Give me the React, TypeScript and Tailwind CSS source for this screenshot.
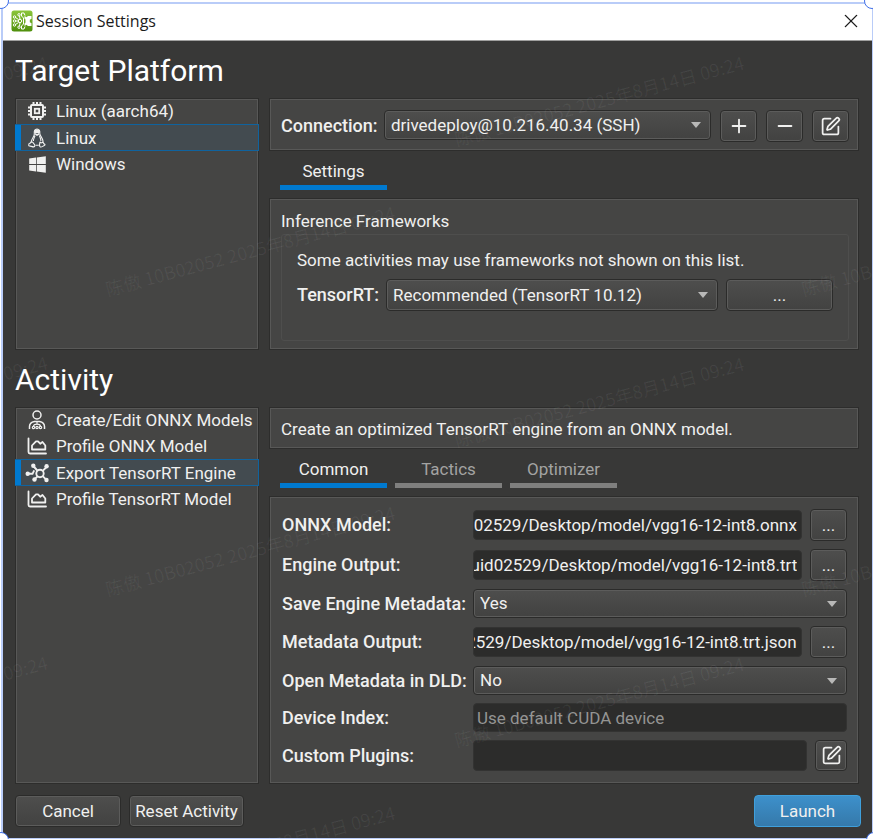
import { useLayoutEffect, useRef, useState } from 'react';
import type { ReactNode } from 'react';
import { Minus, Plus, SquarePen, X } from 'lucide-react';
import { FaWindows } from 'react-icons/fa';

const PANEL = 'border border-[#2d2d2c] bg-[#454544] shadow-[inset_0_0_0_1px_#585857]';
const RAISED =
  'rounded-[4px] border border-[#2b2b2a] bg-linear-to-b from-[#4e4e4d] to-[#424241] shadow-[inset_0_0_0_1px_#5c5c5b]';
const LABEL = 'text-[18px] font-medium whitespace-nowrap';

function AppIcon() {
  return (
    <svg viewBox="0 0 22 22" className="size-[22px] shrink-0" aria-hidden="true">
      <defs>
        <linearGradient id="app-green" x1="0" y1="0" x2="0" y2="1">
          <stop offset="0" stopColor="#8cc63a" />
          <stop offset="1" stopColor="#4f8f0c" />
        </linearGradient>
      </defs>
      <rect x="0.5" y="0.5" width="21" height="21" rx="2.5" fill="url(#app-green)" />
      <g fill="none" stroke="#fff" strokeWidth="1">
        <path d="M4.500 7.500l3 2M4.500 11h3M4.500 14.500l3-2M8.500 6l.5 3M8.500 16l.5-3" />
        <circle cx="3.500" cy="7" r="1.200" />
        <circle cx="3.500" cy="11" r="1.200" />
        <circle cx="3.500" cy="15" r="1.200" />
        <circle cx="8" cy="4.800" r="1.200" />
        <circle cx="8" cy="17.200" r="1.200" />
        <circle cx="9" cy="11" r="1.700" />
        <path d="M10.500 3v3l2 2v6l-2 2v3M10.500 3h2.500l1 2.500M10.500 19h2.500l1-2.500" />
      </g>
      <path
        d="M13.500 6l2 1.200L17 6h3.500v2.800l-1.700 1v2.400l1.700 1V16H17l-1.500-1.200-2 1.200v-2.500l1-1v-3l-1-1z"
        fill="#fff"
      />
    </svg>
  );
}

function ChipIcon() {
  return (
    <svg viewBox="0 0 20 20" className="size-5" fill="none" stroke="currentColor" strokeWidth="2" aria-hidden="true">
      <rect x="4" y="4" width="12" height="12" rx="1" />
      <rect x="7.800" y="7.800" width="4.400" height="4.400" strokeWidth="1.800" />
      <path
        d="M6.500 4V1M10 4V1M13.500 4V1M6.500 19v-3M10 19v-3M13.500 19v-3M4 6.500H1M4 10H1M4 13.500H1M19 6.500h-3M19 10h-3M19 13.500h-3"
        strokeWidth="2"
      />
    </svg>
  );
}

function PenguinIcon() {
  return (
    <svg viewBox="0 0 20 20" className="size-5" fill="none" stroke="currentColor" strokeWidth="1.100" aria-hidden="true">
      <path d="M7.300 6C7 2.800 7.700 1 10 1s3.100 1.800 2.800 4.500c.2 2.300 2.600 4.300 3.100 7.100.2 1 .1 1.700-.2 2.200M7.300 6c.1 2.300-2.300 4.300-2.900 7-.1.700-.2 1-.1 1.500" />
      <path d="M7.900 3C8.200 1.500 11.800 1.500 12.200 3v1.500H7.900z" fill="currentColor" />
      <path d="M8 5.700l2 1.300 2.200-1.300" strokeWidth="1.600" />
      <path d="M8 7.500c-.5 2-1.700 3.500-1.600 5.500M12.400 7.500c.6 2 1.500 3 1.500 5.500M8.500 17.300h3.300" />
      <path d="M4.500 13.800c1.200 0 2 1.300 2.700 2.300 1 1.300.9 2.700-.5 2.800-1.500 0-3-.9-4.400-1-1-.1-.4-1.300-.4-2 0-1 1.700-.4 1.800-1.300zM13 13.800c.5 1.400 2.200 1.200 2.900.4.700.3.400 1.500 1.500 1.900 1.200.5.400 1.100-.6 1.600-1.400.6-2 1.700-3.500 1.200-1.600-.5-.6-3-.3-5.100z" />
    </svg>
  );
}

function ModelEditIcon() {
  return (
    <svg viewBox="0 0 20 20" className="size-5" fill="none" stroke="currentColor" strokeWidth="1.500" aria-hidden="true">
      <circle cx="10" cy="5" r="4" />
      <path d="M2.500 19v-2.500c0-3 2.500-4.500 5-5h5c2.500.5 5 2 5 5V19" />
      <path d="M10 12v2.500M6.500 16.500c0-1.800 1-2.300 3.500-2.300s3.500.5 3.500 2.300" strokeWidth="1.200" />
      <circle cx="6.500" cy="17.500" r="1.200" strokeWidth="1.200" />
      <circle cx="10" cy="17.500" r="1.200" strokeWidth="1.200" />
      <circle cx="13.500" cy="17.500" r="1.200" strokeWidth="1.200" />
    </svg>
  );
}

function ProfileIcon() {
  return (
    <svg viewBox="0 0 20 18" className="h-[18px] w-5" fill="none" stroke="currentColor" strokeWidth="1.800" strokeLinejoin="round" strokeLinecap="round" aria-hidden="true">
      <path d="M1.500 1.500v13.500q0 1.500 1.500 1.500h16" />
      <path d="M5 12.500V8.500L9 4.300h2l2.200 2.400L15.500 5l2.800 3.500v4z" />
    </svg>
  );
}

function EngineIcon() {
  return (
    <svg viewBox="0 0 24 20" className="h-5 w-6" fill="none" stroke="currentColor" strokeWidth="1.900" aria-hidden="true">
      <circle cx="15" cy="10.500" r="3.700" />
      <path d="M2.500 10.800h5l1.700-3.500M8.300 3l4 4.500M9.500 16.300l3-3M17.700 7.800L22 3.500M17.700 13.200l4 4" />
      <g fill="currentColor" stroke="none">
        <circle cx="2.700" cy="10.800" r="2.200" />
        <circle cx="8.300" cy="2.700" r="2.200" />
        <circle cx="9.500" cy="16.500" r="2.200" />
        <circle cx="21.600" cy="3.200" r="2.200" />
        <circle cx="21.500" cy="17" r="2.200" />
      </g>
    </svg>
  );
}

interface ListItem {
  label: string;
  icon: ReactNode;
}

const platforms: ListItem[] = [
  { label: 'Linux (aarch64)', icon: <ChipIcon /> },
  { label: 'Linux', icon: <PenguinIcon /> },
  { label: 'Windows', icon: <FaWindows className="size-[19px]" /> },
];

const activities: ListItem[] = [
  { label: 'Create/Edit ONNX Models', icon: <ModelEditIcon /> },
  { label: 'Profile ONNX Model', icon: <ProfileIcon /> },
  { label: 'Export TensorRT Engine', icon: <EngineIcon /> },
  { label: 'Profile TensorRT Model', icon: <ProfileIcon /> },
];

function SideList({ items, initial }: { items: ListItem[]; initial: number }) {
  const [selected, setSelected] = useState(initial);

  return (
    <ul className={`w-[244px] shrink-0 ${PANEL}`}>
      {items.map((item, i) => (
        <li key={item.label} className="-mx-px first:-mt-px">
          <button
            type="button"
            aria-pressed={i === selected}
            onClick={() => setSelected(i)}
            className={`flex w-full items-center border-y text-left whitespace-nowrap ${
              i === selected
                ? 'h-[27px] border-r border-[#0f639f] bg-[#434b50]'
                : 'h-[26px] border-transparent'
            }`}
          >
            <span className={`h-full w-[6px] shrink-0 ${i === selected ? 'bg-[#0079cf]' : ''}`} />
            <span className="mr-[3px] flex w-8 shrink-0 justify-center">{item.icon}</span>
            {item.label}
          </button>
        </li>
      ))}
    </ul>
  );
}

interface SelectProps {
  id: string;
  value: string;
  className: string;
}

function Select({ id, value, className }: SelectProps) {
  return (
    <div className={`relative min-w-0 ${className}`}>
      <select id={id} className={`size-full appearance-none pr-6 pb-px pl-[6px] ${RAISED}`}>
        <option>{value}</option>
      </select>
      <svg viewBox="0 0 10 6" className="pointer-events-none absolute top-1/2 right-[10px] h-[6px] w-[10px] -translate-y-1/2" aria-hidden="true">
        <path d="M0 0h10L5 6z" fill="#b8b8b7" />
      </svg>
    </div>
  );
}

function PathInput({ id, value }: { id: string; value: string }) {
  const ref = useRef<HTMLInputElement>(null);

  // keep the file name, not the drive, in view
  useLayoutEffect(() => {
    if (ref.current) ref.current.scrollLeft = ref.current.scrollWidth;
  }, [value]);

  return (
    <input
      ref={ref}
      id={id}
      type="text"
      defaultValue={value}
      className="h-[30px] min-w-0 flex-1 rounded-[4px] border border-[#333332] bg-[#2c2c2b] pr-1 pb-px"
    />
  );
}

function Tab({ label, active, onClick }: { label: string; active: boolean; onClick?: () => void }) {
  return (
    <button
      type="button"
      role="tab"
      aria-selected={active}
      onClick={onClick}
      className={`h-[31px] w-[107px] border-b-[5px] pb-[3px] ${
        active ? 'border-[#0079cf]' : 'border-[#7f7f7e] text-[#a3a3a2]'
      }`}
    >
      {label}
    </button>
  );
}

function BrowseRow({ id, label, value }: { id: string; label: string; value: string }) {
  return (
    <>
      <label htmlFor={id} className={LABEL}>{label}</label>
      <div className="flex items-center gap-2">
        <PathInput id={id} value={value} />
        <button type="button" aria-label={`Browse ${label}`} className={`h-8 w-[37px] ${RAISED}`}>...</button>
      </div>
    </>
  );
}

const stamps = [
  'left-[99px] top-[238px]',
  'left-[99px] top-[538px]',
  'left-[448px] top-[88px]',
  'left-[448px] top-[389px]',
  'left-[448px] top-[689px]',
  'left-[99px] top-[838px]',
  'left-[795px] top-[238px]',
  'left-[795px] top-[538px]',
];

const edgeStamps = ['left-[2px] top-[55px]', 'left-[2px] top-[355px]', 'left-[2px] top-[655px]'];

function Watermark() {
  return (
    <div
      className="pointer-events-none absolute inset-0 overflow-hidden text-center font-['Noto_Sans_CJK_SC',sans-serif] text-[18px] leading-6 whitespace-nowrap text-white/6"
      aria-hidden="true"
    >
      {stamps.map((place) => (
        <span key={place} className={`absolute w-[302px] -rotate-15 ${place}`}>
          陈傲 10B02052 2025年8月14日 09:24
        </span>
      ))}
      {edgeStamps.map((place) => (
        <span key={place} className={`absolute w-[46px] -rotate-15 ${place}`}>09:24</span>
      ))}
    </div>
  );
}

export default function App() {
  const [tab, setTab] = useState('Common');

  return (
    <div className="relative flex min-h-screen flex-col overflow-hidden bg-white pt-[2px] pl-px font-['Roboto',sans-serif] text-[17px] leading-6 text-[#f0f0ef]">
      <div className="flex flex-1 flex-col border-2 border-r border-b border-[#b9ccf8]">
        <header className="flex h-[37px] items-center gap-[3px] border-b border-[#a0a09f] bg-white pr-3 pb-[2px] pl-2 text-[#1c1c1c]">
          <AppIcon />
          <h1 className="flex-1 font-['Open_Sans',sans-serif] text-[16px]">Session Settings</h1>
          <button type="button" aria-label="Close">
            <X className="size-[18px] scale-125" strokeWidth={1.5} />
          </button>
        </header>

        <main className="flex flex-1 flex-col bg-[#383837] pl-3">
          <h2 className="h-[57px] pt-[3px] text-[30px] leading-[53px] text-white">Target Platform</h2>
          <div className="flex gap-[10px] pr-[13px]">
            <SideList items={platforms} initial={1} />
            <div className="min-w-0 flex-1">
              <div className={`flex h-[53px] items-start gap-[9px] pt-[11px] pr-[9px] pl-[11px] ${PANEL}`}>
                <label htmlFor="connection" className={`w-[94px] leading-8 ${LABEL}`}>Connection:</label>
                <Select id="connection" value="drivedeploy@10.216.40.34 (SSH)" className="h-[30px] flex-1" />
                <button type="button" aria-label="Add connection" className={`flex h-8 w-[37px] items-center justify-center ${RAISED}`}>
                  <Plus className="size-[22px]" />
                </button>
                <button type="button" aria-label="Remove connection" className={`flex h-8 w-[37px] items-center justify-center ${RAISED}`}>
                  <Minus className="size-[22px]" />
                </button>
                <button type="button" aria-label="Edit connection" className={`flex h-8 w-[37px] items-center justify-center ${RAISED}`}>
                  <SquarePen className="size-[21px]" />
                </button>
              </div>
              <div role="tablist" className="flex h-[47px] px-[11px] pt-2">
                <Tab label="Settings" active />
              </div>
              <section className={`h-[152px] pt-[10px] pr-[9px] pl-[11px] ${PANEL}`}>
                <h3>Inference Frameworks</h3>
                <div className="mt-px h-[107px] rounded-[3px] border border-[#4e4e4d] px-[15px] pt-[13px]">
                  <p className="whitespace-nowrap">Some activities may use frameworks not shown on this list.</p>
                  <div className="mt-[7px] flex items-center gap-2">
                    <label htmlFor="tensorrt" className={`w-[81px] ${LABEL}`}>TensorRT:</label>
                    <Select id="tensorrt" value="Recommended (TensorRT 10.12)" className="h-8 flex-1" />
                    <button type="button" aria-label="Browse TensorRT" className={`h-8 w-[107px] ${RAISED}`}>...</button>
                  </div>
                </div>
              </section>
            </div>
          </div>

          <h2 className="h-[57px] pt-[3px] text-[30px] leading-[53px] text-white">Activity</h2>
          <div className="flex gap-[10px] pr-[13px]">
            <SideList items={activities} initial={2} />
            <div className="min-w-0 flex-1">
              <p className={`h-[42px] pt-[9px] pl-[11px] ${PANEL}`}>
                Create an optimized TensorRT engine from an ONNX model.
              </p>
              <div role="tablist" className="flex h-[47px] gap-2 px-[11px] pt-2">
                {['Common', 'Tactics', 'Optimizer'].map((name) => (
                  <Tab key={name} label={name} active={tab === name} onClick={() => setTab(name)} />
                ))}
              </div>
              <form className={`grid grid-cols-[183px_minmax(0,1fr)] items-center gap-2 py-3 pr-[11px] pl-3 ${PANEL}`}>
                <BrowseRow id="onnx" label="ONNX Model:" value="C:/Users/uid02529/Desktop/model/vgg16-12-int8.onnx" />
                <BrowseRow id="engine" label="Engine Output:" value="C:/Users/uid02529/Desktop/model/vgg16-12-int8.trt" />
                <label htmlFor="save-meta" className={LABEL}>Save Engine Metadata:</label>
                <Select id="save-meta" value="Yes" className="h-[29px]" />
                <BrowseRow id="metadata" label="Metadata Output:" value="C:/Users/uid02529/Desktop/model/vgg16-12-int8.trt.json" />
                <label htmlFor="open-dld" className={LABEL}>Open Metadata in DLD:</label>
                <Select id="open-dld" value="No" className="h-[29px]" />
                <label htmlFor="device" className={LABEL}>Device Index:</label>
                <input
                  id="device"
                  type="text"
                  placeholder="Use default CUDA device"
                  className="h-[29px] w-full rounded-[4px] border border-[#333332] bg-[#2c2c2b] px-[3px] placeholder:text-[#949493]"
                />
                <label htmlFor="plugins" className={LABEL}>Custom Plugins:</label>
                <div className="flex items-center gap-2">
                  <input id="plugins" type="text" className="h-[31px] min-w-0 flex-1 rounded-[4px] border border-[#333332] bg-[#2c2c2b] px-1" />
                  <button type="button" aria-label="Edit plugins" className={`flex h-[31px] w-8 items-center justify-center ${RAISED}`}>
                    <SquarePen className="size-[21px]" />
                  </button>
                </div>
              </form>
            </div>
          </div>

          <footer className="flex gap-2 py-[11px] pr-[11px]">
            <button type="button" className={`h-8 w-[106px] ${RAISED}`}>Cancel</button>
            <button type="button" className={`h-8 w-[115px] whitespace-nowrap ${RAISED}`}>Reset Activity</button>
            <button
              type="button"
              className="ml-auto h-8 w-[107px] rounded-[4px] border border-[#3fa0dc] bg-linear-to-b from-[#3d90cb] to-[#3579aa]"
            >
              Launch
            </button>
          </footer>
        </main>
      </div>

      <Watermark />
      <span className="absolute -top-[7px] -left-[7px] size-4 rounded-full border border-[#3f6fe8] bg-white" />
      <span className="absolute -top-[7px] -right-[7px] size-4 rounded-full border border-[#3f6fe8] bg-white" />
      <span className="absolute -bottom-[9px] -left-[7px] size-4 rounded-full border border-[#3f6fe8] bg-white" />
      <span className="absolute -right-[9px] -bottom-[9px] size-4 rounded-full border border-[#3f6fe8] bg-white" />
    </div>
  );
}
